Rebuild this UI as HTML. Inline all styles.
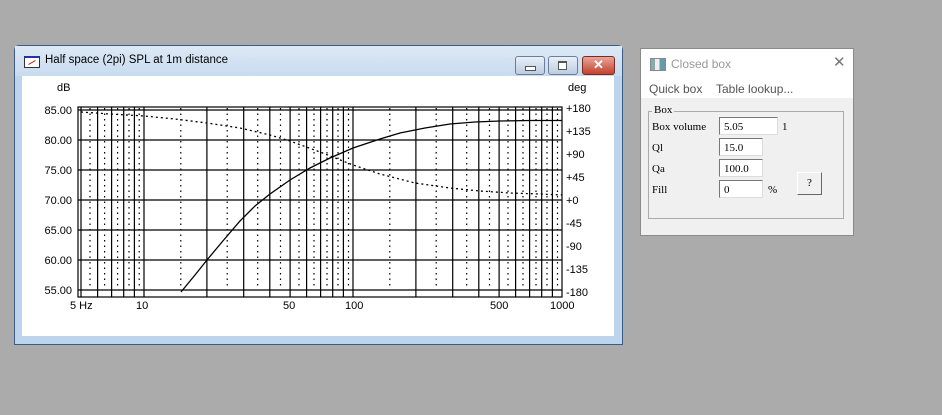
<!DOCTYPE html>
<html><head><style>
body{margin:0;width:942px;height:415px;background:#ababab;position:relative;overflow:hidden;font-family:"Liberation Sans",sans-serif}
.win{position:absolute;left:14px;top:45px;width:607px;height:298px;border:1px solid #3b5c85;background:#bcd4ec;border-radius:5px 5px 0 0}
.tb{position:absolute;left:0;top:0;width:607px;height:30px;background:linear-gradient(#dde9f6,#c8dbef)}
.client{position:absolute;left:7px;top:30px;width:592px;height:260px;background:#fff}
.btn{position:absolute;top:10px;height:17px;border:1px solid #6b7e97;border-radius:3px;background:linear-gradient(#e9f0f9,#bcccdf)}
.dlg{position:absolute;left:640px;top:48px;width:212px;height:186px;border:1px solid #8a8a8a;background:#f0f0f0;font-family:"Liberation Serif",serif;font-size:11px}
.inp{position:absolute;height:18px;background:#fff;border-top:1px solid #777;border-left:1px solid #777;border-right:1px solid #ddd;border-bottom:1px solid #ddd;box-sizing:border-box;padding:2px 0 0 4px;line-height:14px}
.lb{position:absolute}
</style></head><body>
<div class="win">
 <div class="tb">
  <div style="position:absolute;left:9px;top:10px;width:16px;height:12px;border:1px solid #333;background:#fff;border-top:2px solid #2233aa;box-sizing:border-box"><div style="position:absolute;left:3px;top:4px;width:8px;height:1px;background:#c00;transform:rotate(-30deg)"></div></div>
  <div style="position:absolute;left:30px;top:8px;font-size:11.5px;color:#000">Half space (2pi) SPL at 1m distance</div>
  <div class="btn" style="left:500px;width:28px"><div style="position:absolute;left:9px;top:9px;width:9px;height:3px;background:#fff;border:1px solid #555"></div></div>
  <div class="btn" style="left:533px;width:28px"><div style="position:absolute;left:9px;top:4px;width:7px;height:6px;border:1px solid #555;background:#fff;border-top:2px solid #555"></div></div>
  <div class="btn" style="left:567px;width:31px;background:linear-gradient(#e8a59a,#c2412c);border-color:#7a2b20;color:#fff;font-weight:bold;font-size:13px;text-align:center;line-height:16px">✕</div>
 </div>
 <div class="client"></div>
</div>
<svg style="position:absolute;left:0;top:0" width="942" height="415" font-family="Liberation Sans,sans-serif" font-size="11">
 <text x="57" y="91">dB</text><text x="568" y="91">deg</text>
 <g text-anchor="end">
  <text x="72" y="114">85.00</text><text x="72" y="144">80.00</text><text x="72" y="174">75.00</text><text x="72" y="204">70.00</text><text x="72" y="234">65.00</text><text x="72" y="264">60.00</text><text x="72" y="294">55.00</text>
 </g>
 <g>
  <text x="566" y="112">+180</text><text x="566" y="135">+135</text><text x="566" y="158">+90</text><text x="566" y="181">+45</text><text x="566" y="204">+0</text><text x="566" y="227">-45</text><text x="566" y="250">-90</text><text x="566" y="273">-135</text><text x="566" y="296">-180</text>
 </g>
 <text x="70" y="309">5 Hz</text><text x="136" y="309">10</text><text x="283" y="309">50</text><text x="345" y="309">100</text><text x="490" y="309">500</text><text x="550" y="309">1000</text>
 <g stroke="#000" stroke-width="1.2" fill="none">
  <rect x="78" y="107" width="484" height="190"/>
  <path d="M78 110H562M78 140H562M78 170H562M78 200H562M78 230H562M78 260H562M78 290H562"/>
  <path d="M81 107V297M97.6 107V297M111.6 107V297M123.7 107V297M134.4 107V297M144 107V297M206.9 107V297M243.7 107V297M269.8 107V297M290.1 107V297M306.6 107V297M320.6 107V297M332.7 107V297M343.4 107V297M353 107V297M415.9 107V297M452.7 107V297M478.8 107V297M499.1 107V297M515.6 107V297M529.6 107V297M541.7 107V297M552.4 107V297"/>
 </g>
 <g stroke="#000" stroke-width="1.2" stroke-dasharray="1.5 4">
  <path d="M90 108V290M104.6 108V290M117.6 108V290M129 108V290M139.2 108V290M180.8 108V290M227.2 108V290M257.7 108V290M280.5 108V290M299 108V290M314 108V290M327 108V290M338 108V290M348.5 108V290M389.8 108V290M436.2 108V290M466.7 108V290M489.5 108V290M508 108V290M523 108V290M536 108V290M547 108V290M557.5 108V290"/>
 </g>
 <polyline fill="none" stroke="#000" stroke-width="1.3" points="181,292 195,275 207,260 222,242 240,221 255,206 270,194 290,180 310,168 330,158 353,148 380,139 400,133 425,128 450,124 475,122 500,121 530,120.5 562,120.5"/>
 <polyline fill="none" stroke="#000" stroke-width="1.3" stroke-dasharray="2 3" points="81,112 110,114 144,116 175,119 207,123 240,128 270,135 290,141 320,152 353,165 380,174 415,183 450,188 480,191 510,193 540,194 562,195"/>
</svg>
<div class="dlg">
 <div style="position:absolute;left:0;top:0;width:212px;height:49px;background:#fff"></div>
 <div style="position:absolute;left:9px;top:9px;width:14px;height:11px;border:1px solid #888;background:linear-gradient(90deg,#8aa 0 30%,#eee 30% 60%,#69a 60%)"></div>
 <div style="position:absolute;left:30px;top:8px;font-family:'Liberation Sans',sans-serif;font-size:12px;color:#999">Closed box</div>
 <div style="position:absolute;left:192px;top:4px;font-family:'Liberation Sans',sans-serif;font-size:15px;color:#777">✕</div>
 <div style="position:absolute;left:8px;top:33px;font-family:'Liberation Sans',sans-serif;font-size:12px;color:#555">Quick box</div>
 <div style="position:absolute;left:75px;top:33px;font-family:'Liberation Sans',sans-serif;font-size:12px;color:#555">Table lookup...</div>
 <div style="position:absolute;left:7px;top:62px;width:194px;height:106px;border:1px solid #aaa"></div>
 <div class="lb" style="left:11px;top:55px;background:#f0f0f0;padding:0 2px">Box</div>
 <div class="lb" style="left:11px;top:72px">Box volume</div>
 <div class="inp" style="left:78px;top:68px;width:59px">5.05</div>
 <div class="lb" style="left:141px;top:72px">1</div>
 <div class="lb" style="left:11px;top:93px">Ql</div>
 <div class="inp" style="left:78px;top:89px;width:44px">15.0</div>
 <div class="lb" style="left:11px;top:114px">Qa</div>
 <div class="inp" style="left:78px;top:110px;width:44px">100.0</div>
 <div class="lb" style="left:11px;top:135px">Fill</div>
 <div class="inp" style="left:78px;top:131px;width:44px">0</div>
 <div class="lb" style="left:127px;top:135px">%</div>
 <div style="position:absolute;left:156px;top:123px;width:25px;height:23px;box-sizing:border-box;border-top:1px solid #fff;border-left:1px solid #fff;border-right:1px solid #666;border-bottom:1px solid #666;background:#f0f0f0;text-align:center;line-height:20px">?</div>
</div>
</body></html>
